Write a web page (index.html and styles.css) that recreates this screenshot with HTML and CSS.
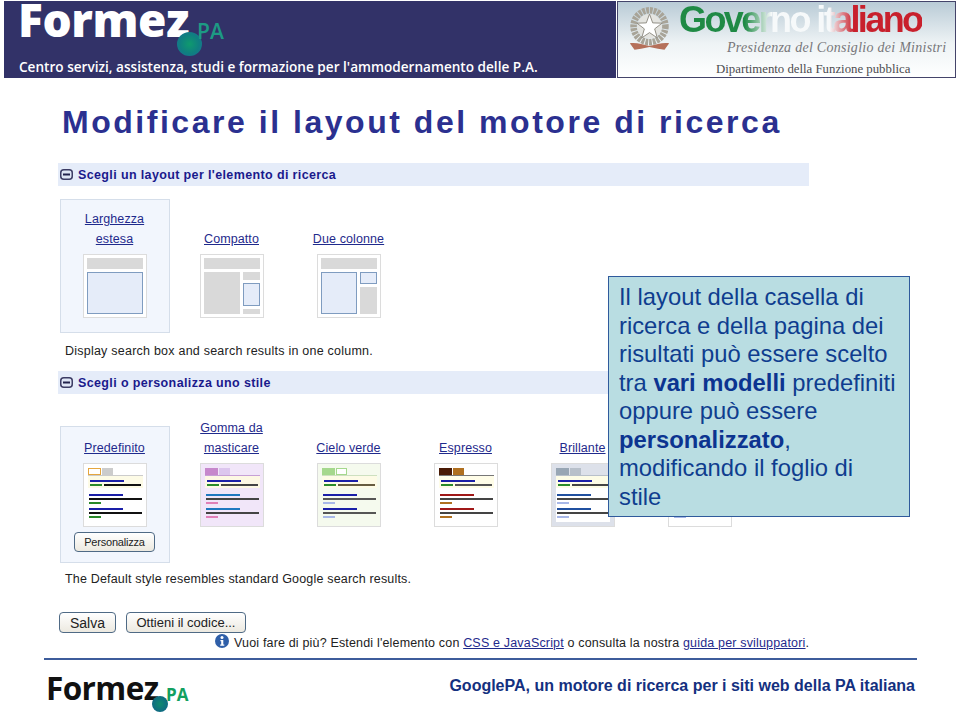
FILE: index.html
```html
<!DOCTYPE html>
<html lang="it">
<head>
    <meta charset="UTF-8">
    <title>Modificare il layout del motore di ricerca</title>
    <link rel="stylesheet" href="styles.css">
</head>
<body>
    <svg class="defs" width="0" height="0">
        <symbol id="style-thumb" viewBox="0 0 64 64">
            <rect x="0.5" y="0.5" width="63" height="63" class="t-bg"/>
            <rect x="5" y="14" width="54" height="45" class="t-panel"/>
            <rect x="5" y="13" width="55" height="12" class="t-band"/>
            <rect x="5.5" y="5.5" width="12" height="6" class="t-tab1"/>
            <rect x="19.5" y="5.5" width="10" height="6" class="t-tab2"/>
            <rect x="5" y="12" width="55" height="1" class="t-rule"/>
            <rect x="7" y="17" width="34" height="2" class="t-title1"/>
            <rect x="7" y="21" width="12" height="2" class="t-url1"/>
            <rect x="21" y="21" width="37" height="2" class="t-text1"/>
            <rect x="6" y="31" width="34" height="2" class="t-title"/>
            <rect x="6" y="35" width="53" height="2" class="t-text"/>
            <rect x="6" y="39" width="12" height="2" class="t-url"/>
            <rect x="6" y="45" width="34" height="2" class="t-title"/>
            <rect x="6" y="49" width="53" height="2" class="t-text"/>
            <rect x="6" y="53" width="12" height="2" class="t-url"/>
        </symbol>
    </svg>

    <header class="banner">
        <div class="banner-left">
            <div class="logo logo-big">
                <span class="logo-word">Formez</span><span class="logo-dot"></span><span class="logo-pa">PA</span>
            </div>
            <p class="tagline">Centro servizi, assistenza, studi e formazione per l'ammodernamento delle P.A.</p>
        </div>
        <div class="banner-right">
            <svg class="emblem" viewBox="0 0 48 52" width="45" height="50">
                <circle cx="24" cy="22" r="17" fill="none" stroke="#a8a498" stroke-width="7" stroke-dasharray="3 1"/>
                <circle cx="24" cy="22" r="13" fill="#e4e4e0"/>
                <path d="M24 9l3.4 9.4 10 .3-7.9 6.1 2.8 9.6-8.3-5.6-8.3 5.6 2.8-9.6-7.9-6.1 10-.3z" fill="#fff" stroke="#8d8a80" stroke-width="1"/>
                <path d="M3 40c7-1 13 1 21 3 8-2 14-4 21-3l-5 7-7-1-9-2-9 2-7 1z" fill="#b5705a"/>
            </svg>
            <div class="gov-text">
                <div class="gov-name">Governo italiano</div>
                <div class="gov-office">Presidenza del Consiglio dei Ministri</div>
                <div class="gov-dept">Dipartimento della Funzione pubblica</div>
            </div>
        </div>
    </header>

    <h1 class="title">Modificare il layout del motore di ricerca</h1>

    <main class="shot">
        <h2 class="bar">
            <svg class="toggle" viewBox="0 0 13 11" width="13" height="11"><rect x="0.75" y="0.75" width="11.5" height="9.5" rx="3" fill="#dfe6f5" stroke="#3c3c64" stroke-width="1.5"/><rect x="3" y="4.5" width="7" height="2" fill="#22224c"/></svg>
            Scegli un layout per l'elemento di ricerca
        </h2>
        <div class="options options-layout">
            <div class="option selected">
                <a href="#">Larghezza<br>estesa</a>
                <div class="thumb"><div class="lay-top"></div><div class="lay-row"><div class="lay-main blue"></div></div></div>
            </div>
            <div class="option">
                <a href="#">Compatto</a>
                <div class="thumb">
                    <div class="lay-top"></div>
                    <div class="lay-row">
                        <div class="lay-main"></div>
                        <div class="lay-side"><div class="g small"></div><div class="blue grow"></div><div class="g tiny"></div></div>
                    </div>
                </div>
            </div>
            <div class="option">
                <a href="#">Due colonne</a>
                <div class="thumb">
                    <div class="lay-top"></div>
                    <div class="lay-row">
                        <div class="lay-main blue"></div>
                        <div class="lay-side"><div class="blue box"></div><div class="g grow"></div></div>
                    </div>
                </div>
            </div>
        </div>
        <p class="note note-layout">Display search box and search results in one column.</p>

        <h2 class="bar bar-style">
            <svg class="toggle" viewBox="0 0 13 11" width="13" height="11"><rect x="0.75" y="0.75" width="11.5" height="9.5" rx="3" fill="#dfe6f5" stroke="#3c3c64" stroke-width="1.5"/><rect x="3" y="4.5" width="7" height="2" fill="#22224c"/></svg>
            Scegli o personalizza uno stile
        </h2>
        <div class="options options-style">
            <div class="option selected">
                <a href="#">Predefinito</a>
                <svg class="style-thumb st-default" width="64" height="64"><use href="#style-thumb"/></svg>
                <button class="btn btn-small">Personalizza</button>
            </div>
            <div class="option">
                <a href="#">Gomma da<br>masticare</a>
                <svg class="style-thumb st-gum" width="64" height="64"><use href="#style-thumb"/></svg>
            </div>
            <div class="option">
                <a href="#">Cielo verde</a>
                <svg class="style-thumb st-green" width="64" height="64"><use href="#style-thumb"/></svg>
            </div>
            <div class="option">
                <a href="#">Espresso</a>
                <svg class="style-thumb st-espresso" width="64" height="64"><use href="#style-thumb"/></svg>
            </div>
            <div class="option">
                <a href="#">Brillante</a>
                <svg class="style-thumb st-shiny" width="64" height="64"><use href="#style-thumb"/></svg>
            </div>
            <div class="option">
                <svg class="style-thumb st-plain" width="64" height="64"><use href="#style-thumb"/></svg>
            </div>
        </div>
        <p class="note note-style">The Default style resembles standard Google search results.</p>

        <div class="actions">
            <button class="btn btn-save">Salva</button>
            <button class="btn btn-code">Ottieni il codice...</button>
        </div>
        <p class="more"><svg class="info" viewBox="0 0 14 14" width="14" height="14"><circle cx="7" cy="7" r="7" fill="#2f5fa8"/><circle cx="7" cy="3.6" r="1.5" fill="#fff"/><path d="M5.4 6h2.9v4.6h1v1.2H5.2v-1.2h1V7.2h-.8z" fill="#fff"/></svg>Vuoi fare di più? Estendi l'elemento con <a href="#">CSS e JavaScript</a> o consulta la nostra <a href="#">guida per sviluppatori</a>.</p>
    </main>

    <aside class="callout">
        Il layout della casella di ricerca e della pagina dei risultati può essere scelto tra <b>vari modelli</b> predefiniti oppure può essere <b>personalizzato</b>, modificando il foglio di stile
    </aside>

    <footer class="foot">
        <div class="logo logo-small">
            <span class="logo-word">Formez</span><span class="logo-dot"></span><span class="logo-pa">PA</span>
        </div>
        <div class="foot-text">GooglePA, un motore di ricerca per i siti web della PA italiana</div>
    </footer>
</body>
</html>
```

FILE: styles.css
```css
html, body {
    margin: 0;
    padding: 0;
}
body {
    width: 960px;
    height: 716px;
    position: relative;
    overflow: hidden;
    background: #fff;
    font-family: "Liberation Sans", Arial, sans-serif;
}
.defs {
    display: block;
    height: 0;
}

/* banner */
.banner {
    display: flex;
    height: 77px;
    margin: 1px 4px 0;
    gap: 1px;
}
.banner-left {
    flex: none;
    width: 612px;
    background: #323268;
    color: #fff;
    display: flex;
    flex-direction: column;
    padding-left: 14px;
    box-sizing: border-box;
}
.tagline {
    margin: 18px 0 0 1px;
    font-family: "Open Sans", sans-serif;
    font-size: 13.6px;
    font-weight: 600;
    line-height: 20px;
    white-space: nowrap;
}
.logo {
    position: relative;
    font-family: "Open Sans", sans-serif;
    font-weight: 800;
    line-height: 1;
}
.logo-word {
    display: block;
}
.logo-big {
    height: 38px;
    font-size: 46px;
    line-height: 37px;
    letter-spacing: -0.4px;
}
.logo-dot {
    position: absolute;
    border-radius: 50%;
    background: radial-gradient(circle, #0f9a6e 0, #0f7f80 55%, #1c6f98 100%);
}
.logo-pa {
    position: absolute;
    font-weight: 600;
    letter-spacing: 0;
    color: #1d9a84;
}
.logo-big .logo-dot {
    left: 159px;
    top: 31px;
    width: 25px;
    height: 24px;
}
.logo-big .logo-pa {
    left: 179px;
    top: 18px;
    font-size: 21px;
    line-height: 24px;
}
.banner-right {
    flex: 1;
    min-width: 0;
    display: flex;
    background: linear-gradient(#b9cbd6, #eef3f5 55%, #fff);
    border: 1px solid #44446a;
    box-sizing: border-box;
    padding-left: 9px;
    gap: 7px;
}
.emblem {
    flex: none;
    margin-top: 3px;
}
.gov-text {
    flex: 1;
    min-width: 0;
}
.gov-name {
    width: 243px;
    margin-top: 0;
    font-size: 36px;
    line-height: 36px;
    font-weight: 700;
    letter-spacing: -2.6px;
    white-space: nowrap;
    background: linear-gradient(90deg, #1f8a45 0, #1f8a45 27%, #f6f9fa 38%, #f6f9fa 62%, #c8202c 72%, #c8202c 100%);
    -webkit-background-clip: text;
    background-clip: text;
    color: transparent;
}
.gov-office {
    margin: 1px 0 0 48px;
    font-family: "Liberation Serif", serif;
    font-style: italic;
    font-size: 14px;
    line-height: 17px;
    letter-spacing: 0.27px;
    color: #77777a;
    white-space: nowrap;
}
.gov-dept {
    margin: 7px 0 0 37px;
    font-family: "Liberation Serif", serif;
    font-size: 12.8px;
    line-height: 13px;
    color: #4c4c50;
    white-space: nowrap;
}

/* title */
.title {
    margin: 25px 0 0 62px;
    font-size: 32px;
    line-height: 38px;
    font-weight: 700;
    letter-spacing: 2.53px;
    color: #2b3090;
    white-space: nowrap;
}

/* google panel */
.shot {
    margin: 22px 0 0 58px;
    width: 800px;
    color: #222;
    font-size: 12.5px;
}
.shot a {
    color: #1f2a8c;
}
.bar {
    display: flex;
    align-items: center;
    gap: 5px;
    width: 751px;
    height: 23px;
    margin: 0;
    padding-left: 2px;
    box-sizing: border-box;
    background: #e5ecf9;
    color: #1a1a8c;
    font-size: 12.5px;
    letter-spacing: 0.37px;
}
.options {
    display: grid;
    grid-template-columns: repeat(6, 117px);
    margin-left: -2px;
}
.options-layout {
    margin-top: 13px;
    height: 134px;
}
.options-style {
    margin-top: 32px;
    height: 137px;
}
.option {
    box-sizing: border-box;
    width: 110px;
    justify-self: center;
    display: flex;
    flex-direction: column;
    align-items: center;
    text-align: center;
    line-height: 20px;
    letter-spacing: 0.1px;
}
.selected {
    background: #f2f6fd;
    border: 1px solid #d5deea;
}
.options-layout .option {
    justify-content: flex-end;
    height: 119px;
}
.options-layout .selected {
    height: 134px;
    padding-bottom: 14px;
}
.options-style .option {
    justify-content: flex-end;
    height: 101px;
}
.options-style .selected {
    height: 137px;
    justify-content: flex-start;
    padding-top: 11px;
}
.thumb {
    box-sizing: border-box;
    width: 64px;
    height: 64px;
    margin-top: 5px;
    padding: 3px;
    background: #fff;
    border: 1px solid #dcdcdc;
    display: flex;
    flex-direction: column;
    gap: 3px;
}
.lay-top {
    height: 11px;
    background: #d9d9d9;
}
.lay-row {
    flex: 1;
    display: flex;
    gap: 3px;
}
.lay-main {
    flex: 1;
    background: #d9d9d9;
}
.lay-side {
    width: 17px;
    display: flex;
    flex-direction: column;
    gap: 3px;
}
.blue {
    box-sizing: border-box;
    background: #e5ecf9;
    border: 1px solid #7f9cc0;
}
.g {
    background: #d9d9d9;
}
.small {
    height: 8px;
}
.tiny {
    height: 5px;
}
.box {
    height: 12px;
}
.grow {
    flex: 1;
}
.style-thumb {
    display: block;
    margin-top: 5px;
    flex: none;
}
.t-bg { fill: var(--bg); stroke: #dcdcdc; }
.t-panel { fill: var(--panel); }
.t-band { fill: var(--band); }
.t-tab1 { fill: var(--tab1); stroke: var(--tab1s); }
.t-tab2 { fill: var(--tab2); stroke: var(--tab2s); }
.t-rule { fill: var(--rule); }
.t-title1 { fill: #1a1fa8; }
.t-url1 { fill: #2a8a2a; }
.t-text1 { fill: var(--text1); }
.t-title { fill: var(--title); }
.t-text { fill: var(--text); }
.t-url { fill: var(--url); }
.st-default {
    --bg: #fff; --panel: #fff; --band: #fdfbe6;
    --tab1: #fff; --tab1s: #e5a63f; --tab2: #ccc; --tab2s: #ccc; --rule: #ccc;
    --text1: #111; --title: #1a1fa8; --text: #111; --url: #2a8a2a;
}
.st-gum {
    --bg: #f1e6f9; --panel: #f1e6f9; --band: #fdf8e4;
    --tab1: #c688cc; --tab1s: #c688cc; --tab2: #dcc6ee; --tab2s: #dcc6ee; --rule: #c6a0d6;
    --text1: #444; --title: #1e78c0; --text: #444; --url: #e080b8;
}
.st-green {
    --bg: #f5faee; --panel: #f5faee; --band: #fdfbe6;
    --tab1: #a5d88d; --tab1s: #a5d88d; --tab2: #fff; --tab2s: #a5d88d; --rule: #cde0c0;
    --text1: #665c40; --title: #1a1fa8; --text: #555; --url: #a8b8e8;
}
.st-espresso {
    --bg: #fff; --panel: #fff; --band: #fffde8;
    --tab1: #4a1a05; --tab1s: #4a1a05; --tab2: #b07020; --tab2s: #b07020; --rule: #777;
    --text1: #555; --title: #a01818; --text: #444; --url: #b07020;
}
.st-shiny {
    --bg: #dde1ea; --panel: #fff; --band: #fdfce6;
    --tab1: #98a6b4; --tab1s: #98a6b4; --tab2: #b8c0ca; --tab2s: #b8c0ca; --rule: #b8c0ca;
    --text1: #444; --title: #2050a0; --text: #444; --url: #a8b8e8;
}
.st-plain {
    --bg: #fff; --panel: #fff; --band: #fdfbe6;
    --tab1: #ccc; --tab1s: #ccc; --tab2: #ccc; --tab2s: #ccc; --rule: #ccc;
    --text1: #444; --title: #1a1fa8; --text: #444; --url: #a8b8e8;
}
.note {
    margin: 0;
    white-space: nowrap;
    line-height: 16px;
    padding-left: 7px;
}
.note-layout {
    margin-top: 10px;
    letter-spacing: 0.23px;
}
.note-style {
    margin-top: 8px;
    letter-spacing: 0.18px;
}
.bar-style {
    margin-top: 12px;
}
.btn {
    box-sizing: border-box;
    font-family: "Liberation Sans", Arial, sans-serif;
    color: #222;
    border: 1px solid #4f6a85;
    border-radius: 4px;
    background: linear-gradient(#fff, #ece9e0);
    padding: 0;
}
.btn-small {
    width: 81px;
    height: 20px;
    margin-top: 5px;
    font-size: 11px;
    letter-spacing: -0.2px;
}
.actions {
    display: flex;
    gap: 10px;
    margin: 25px 0 0 1px;
}
.btn-save {
    width: 57px;
    height: 21px;
    font-size: 14px;
}
.btn-code {
    width: 120px;
    height: 21px;
    font-size: 13px;
}
.more {
    margin: 0 0 0 157px;
    line-height: 20px;
    white-space: nowrap;
    letter-spacing: 0.17px;
    font-size: 12.5px;
}
.info {
    margin-right: 5px;
    vertical-align: -1px;
}

/* callout over the panel */
.callout {
    position: absolute;
    left: 608px;
    top: 276px;
    width: 302px;
    height: 241px;
    box-sizing: border-box;
    padding: 6px 10px 0;
    background: #b9dde2;
    border: 1px solid #2f5a9c;
    color: #0f3d8f;
    font-size: 23.8px;
    line-height: 28.5px;
}
.callout b {
    color: #0c3490;
}

/* footer */
.foot {
    position: absolute;
    left: 44px;
    top: 658px;
    width: 873px;
    height: 58px;
    border-top: 2px solid #3d5c9b;
    display: flex;
    justify-content: space-between;
}
.logo-small {
    margin: 11px 0 0 2px;
    font-size: 31.5px;
    font-weight: 700;
    line-height: 34px;
    letter-spacing: -0.6px;
    color: #111;
}
.logo-small .logo-dot {
    left: 106px;
    top: 25px;
    width: 16px;
    height: 16px;
    background: radial-gradient(circle, #0f8a6e 0, #0f6f80 60%, #17608e 100%);
}
.logo-small .logo-pa {
    left: 120px;
    top: 14px;
    font-size: 17px;
    font-weight: 700;
    line-height: 20px;
    color: #12a060;
}
.foot-text {
    margin: 16px 2px 0 0;
    font-size: 16px;
    line-height: 20px;
    font-weight: 700;
    color: #14307f;
    white-space: nowrap;
}
```
